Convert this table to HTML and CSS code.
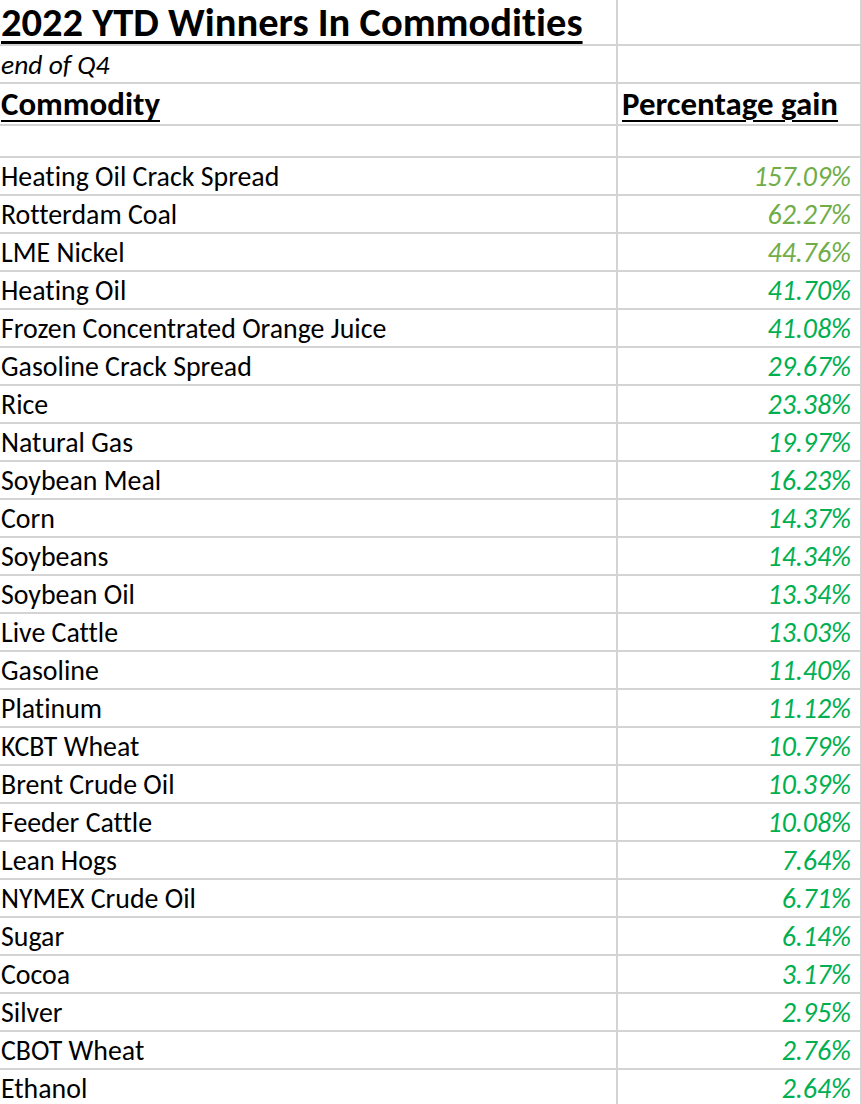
FILE: index.html
```html
<!DOCTYPE html>
<html>
<head>
<meta charset="utf-8">
<link rel="stylesheet" href="styles.css">
</head>
<body>
<div class="sheet">
  <div class="cell c1 r-title"><span class="title">2022 YTD Winners In Commodities</span></div>
  <div class="cell c2 r-title"></div>
  <div class="cell c1 r-sub"><span class="sub">end of Q4</span></div>
  <div class="cell c2 r-sub"></div>
  <div class="cell c1 r-head"><span class="head">Commodity</span></div>
  <div class="cell c2 r-head head-right"><span class="head">Percentage gain</span></div>
  <div class="cell c1 r-blank"></div>
  <div class="cell c2 r-blank"></div>

  <div class="cell c1 row">Heating Oil Crack Spread</div><div class="cell c2 row val light">157.09%</div>
  <div class="cell c1 row">Rotterdam Coal</div><div class="cell c2 row val light">62.27%</div>
  <div class="cell c1 row">LME Nickel</div><div class="cell c2 row val light">44.76%</div>
  <div class="cell c1 row">Heating Oil</div><div class="cell c2 row val">41.70%</div>
  <div class="cell c1 row">Frozen Concentrated Orange Juice</div><div class="cell c2 row val">41.08%</div>
  <div class="cell c1 row">Gasoline Crack Spread</div><div class="cell c2 row val">29.67%</div>
  <div class="cell c1 row">Rice</div><div class="cell c2 row val">23.38%</div>
  <div class="cell c1 row">Natural Gas</div><div class="cell c2 row val">19.97%</div>
  <div class="cell c1 row">Soybean Meal</div><div class="cell c2 row val">16.23%</div>
  <div class="cell c1 row">Corn</div><div class="cell c2 row val">14.37%</div>
  <div class="cell c1 row">Soybeans</div><div class="cell c2 row val">14.34%</div>
  <div class="cell c1 row">Soybean Oil</div><div class="cell c2 row val">13.34%</div>
  <div class="cell c1 row">Live Cattle</div><div class="cell c2 row val">13.03%</div>
  <div class="cell c1 row">Gasoline</div><div class="cell c2 row val">11.40%</div>
  <div class="cell c1 row">Platinum</div><div class="cell c2 row val">11.12%</div>
  <div class="cell c1 row">KCBT Wheat</div><div class="cell c2 row val">10.79%</div>
  <div class="cell c1 row">Brent Crude Oil</div><div class="cell c2 row val">10.39%</div>
  <div class="cell c1 row">Feeder Cattle</div><div class="cell c2 row val">10.08%</div>
  <div class="cell c1 row">Lean Hogs</div><div class="cell c2 row val">7.64%</div>
  <div class="cell c1 row">NYMEX Crude Oil</div><div class="cell c2 row val">6.71%</div>
  <div class="cell c1 row">Sugar</div><div class="cell c2 row val">6.14%</div>
  <div class="cell c1 row">Cocoa</div><div class="cell c2 row val">3.17%</div>
  <div class="cell c1 row">Silver</div><div class="cell c2 row val">2.95%</div>
  <div class="cell c1 row">CBOT Wheat</div><div class="cell c2 row val">2.76%</div>
  <div class="cell c1 row">Ethanol</div><div class="cell c2 row val">2.64%</div>
</div>
</body>
</html>
```

FILE: styles.css
```css
html, body {
  margin: 0;
  padding: 0;
  background: #ffffff;
}

.sheet {
  display: grid;
  grid-template-columns: 618px 244px;
  width: 862px;
  font-family: Carlito, Lato, "Open Sans", sans-serif;
  font-variant-ligatures: none;
  color: #000000;
}

.cell {
  box-sizing: border-box;
  border-bottom: 2px solid #d4d4d4;
  display: flex;
  align-items: center;
  white-space: nowrap;
}

.c1 {
  border-right: 2px solid #d4d4d4;
  padding-left: 1px;
}

.c2 {
  border-right: 2px solid #d4d4d4;
}

.r-title { height: 46px; }
.r-sub { height: 38px; }
.r-head { height: 42px; }
.r-blank { height: 32px; }

.row {
  height: 38px;
  font-size: 27.87px;
}

.title {
  font-size: 40.5px;
  line-height: 1;
  padding-top: 1px;
  font-weight: 700;
  text-decoration: underline;
  text-decoration-thickness: 3px;
  text-underline-offset: 5px;
}

.sub {
  font-size: 27.5px;
  font-style: italic;
}

.head {
  font-size: 32.9px;
  font-weight: 700;
  text-decoration: underline;
  text-decoration-thickness: 2px;
  text-underline-offset: 5px;
}

.head-right {
  padding-left: 4px;
}

.val {
  justify-content: flex-end;
  padding-right: 9px;
  font-style: italic;
  color: #00b050;
}

.val.light {
  color: #70ad47;
}
```
